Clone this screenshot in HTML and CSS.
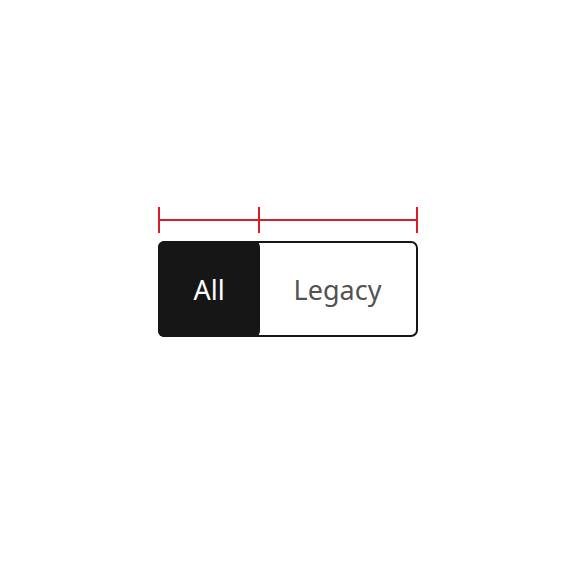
FILE: index.html
```html
<!DOCTYPE html>
<html>
<head>
<meta charset="utf-8">
<link rel="stylesheet" href="styles.css">
</head>
<body>
<div class="stage">
  <div class="spec">
    <div class="measure">
      <div class="seg seg-all"></div>
      <div class="seg seg-legacy"></div>
    </div>
    <div class="switch">
      <div class="opt opt-active">All</div>
      <div class="opt opt-idle">Legacy</div>
    </div>
  </div>
</div>
</body>
</html>
```
FILE: styles.css
```css
html, body {
  margin: 0;
  padding: 0;
  background: #ffffff;
}
.stage {
  width: 576px;
  height: 577px;
  display: flex;
  justify-content: center;
  align-items: flex-start;
  padding-top: 207px;
  box-sizing: border-box;
}
.spec {
  width: 260px;
  display: flex;
  flex-direction: column;
  gap: 8px;
}
.measure {
  display: flex;
  height: 26px;
}
.seg {
  box-sizing: border-box;
  border-left: 2px solid #da1e28;
  display: flex;
  align-items: center;
}
.seg::after {
  content: "";
  display: block;
  height: 2px;
  width: 100%;
  background: #da1e28;
}
.seg-all { width: 100px; }
.seg-legacy { width: 160px; border-right: 2px solid #da1e28; }
.switch {
  box-sizing: border-box;
  height: 96px;
  border: 2px solid #161616;
  border-radius: 7px;
  display: flex;
  font-family: "Noto Sans", "Open Sans", sans-serif;
  font-size: 27px;
}
.opt {
  display: flex;
  align-items: center;
  justify-content: center;
}
.opt-active {
  position: relative;
  z-index: 1;
  margin: -2px 0 -2px -2px;
  width: 102px;
  background: #161616;
  color: #ffffff;
  border-radius: 6px;
}
.opt-idle {
  flex: 1;
  margin-left: -3px;
  border-left: 2px solid #161616;
  color: #525252;
}
```
